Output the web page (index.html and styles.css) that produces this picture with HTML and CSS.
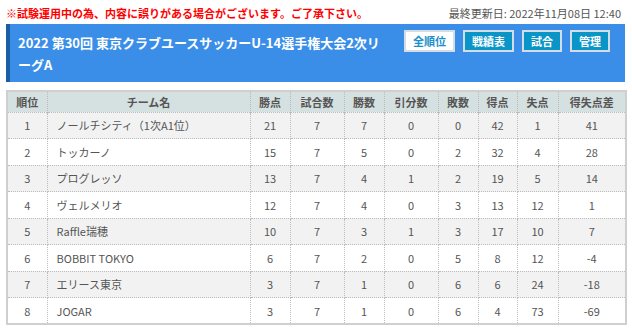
FILE: index.html
```html
<!DOCTYPE html>
<html lang="ja">
<head>
<meta charset="utf-8">
<title>順位表</title>
<link rel="stylesheet" href="styles.css">
</head>
<body>
<div class="page">
  <div class="topline">
    <span class="notice">※試験運用中の為、内容に誤りがある場合がございます。ご了承下さい。</span>
    <span class="updated">最終更新日: 2022年11月08日 12:40</span>
  </div>
  <div class="header">
    <h1 class="title">2022 第30回 東京クラブユースサッカーU-14選手権大会2次リーグA</h1>
    <div class="buttons">
      <a class="btn btn-active">全順位</a>
      <a class="btn">戦績表</a>
      <a class="btn">試合</a>
      <a class="btn">管理</a>
    </div>
  </div>
  <table class="standings">
    <colgroup>
      <col class="c-rank"><col class="c-team"><col class="c-pts"><col class="c-played"><col class="c-win"><col class="c-draw"><col class="c-loss"><col class="c-gf"><col class="c-ga"><col class="c-gd">
    </colgroup>
    <thead>
      <tr><th>順位</th><th>チーム名</th><th>勝点</th><th>試合数</th><th>勝数</th><th>引分数</th><th>敗数</th><th>得点</th><th>失点</th><th>得失点差</th></tr>
    </thead>
    <tbody>
      <tr><td>1</td><td class="team">ノールチシティ（1次A1位）</td><td>21</td><td>7</td><td>7</td><td>0</td><td>0</td><td>42</td><td>1</td><td>41</td></tr>
      <tr><td>2</td><td class="team">トッカーノ</td><td>15</td><td>7</td><td>5</td><td>0</td><td>2</td><td>32</td><td>4</td><td>28</td></tr>
      <tr><td>3</td><td class="team">プログレッソ</td><td>13</td><td>7</td><td>4</td><td>1</td><td>2</td><td>19</td><td>5</td><td>14</td></tr>
      <tr><td>4</td><td class="team">ヴェルメリオ</td><td>12</td><td>7</td><td>4</td><td>0</td><td>3</td><td>13</td><td>12</td><td>1</td></tr>
      <tr><td>5</td><td class="team">Raffle瑞穂</td><td>10</td><td>7</td><td>3</td><td>1</td><td>3</td><td>17</td><td>10</td><td>7</td></tr>
      <tr><td>6</td><td class="team">BOBBIT TOKYO</td><td>6</td><td>7</td><td>2</td><td>0</td><td>5</td><td>8</td><td>12</td><td>-4</td></tr>
      <tr><td>7</td><td class="team">エリース東京</td><td>3</td><td>7</td><td>1</td><td>0</td><td>6</td><td>6</td><td>24</td><td>-18</td></tr>
      <tr><td>8</td><td class="team">JOGAR</td><td>3</td><td>7</td><td>1</td><td>0</td><td>6</td><td>4</td><td>73</td><td>-69</td></tr>
    </tbody>
  </table>
</div>
</body>
</html>
```

FILE: styles.css
```css
* { box-sizing: border-box; }
html, body { margin: 0; padding: 0; background: #fff; }
body {
  font-family: "Noto Sans CJK JP", "Noto Sans", sans-serif;
  color: #555;
}
.page {
  width: 619px;
  margin-left: 6px;
}
.topline {
  display: flex;
  justify-content: space-between;
  align-items: center;
  height: 24px;
  padding-top: 1px;
  font-size: 11px;
  line-height: 14px;
}
.notice { color: #ff0000; font-weight: bold; }
.updated { color: #555; padding-right: 4px; }
.header {
  display: flex;
  align-items: flex-start;
  background: #3a8ee8;
  border-left: 4px solid #1b5ea6;
  height: 58px;
  padding: 7px 15px 0 8px;
}
.title {
  flex: 1;
  margin: 0;
  color: #fff;
  font-size: 13px;
  font-weight: bold;
  line-height: 22px;
  padding-top: 1px;
}
.buttons {
  display: flex;
  gap: 8px;
  margin-left: 12px;
  margin-top: -1px;
}
.btn {
  display: block;
  height: 22px;
  line-height: 18px;
  padding: 0 7px;
  font-size: 11px;
  font-weight: bold;
  color: #fff;
  background: #0a95c9;
  border: 2px solid #d4dde3;
}
.btn-active {
  background: #fff;
  color: #1a8fc9;
}
.standings {
  width: 619px;
  margin-top: 8px;
  border-collapse: collapse;
  table-layout: fixed;
  font-size: 11px;
  border: 2px solid #cfcfcf;
}
.c-rank { width: 40px; }
.c-team { width: 203px; }
.c-pts { width: 40px; }
.c-played { width: 54px; }
.c-win { width: 40px; }
.c-draw { width: 54px; }
.c-loss { width: 40px; }
.c-gf { width: 39px; }
.c-ga { width: 41px; }
.c-gd { width: 68px; }
.standings th {
  background: #d5e0e0;
  height: 21px;
  font-weight: bold;
  color: #555;
  border-left: 1px dotted #b8b8b8;
  padding: 0;
}
.standings td {
  height: 26.5px;
  text-align: center;
  border: 1px dotted #bdbdbd;
  padding: 0;
}
.standings th:first-child, .standings td:first-child { border-left: 2px solid #cfcfcf; }
.standings td:last-child { border-right: 2px solid #cfcfcf; }
.standings tbody tr:last-child td { border-bottom: 2px solid #cfcfcf; }
.standings tbody tr:nth-child(odd) { background: #f2f2f2; }
.standings td.team { text-align: left; padding-left: 9px; }
```
